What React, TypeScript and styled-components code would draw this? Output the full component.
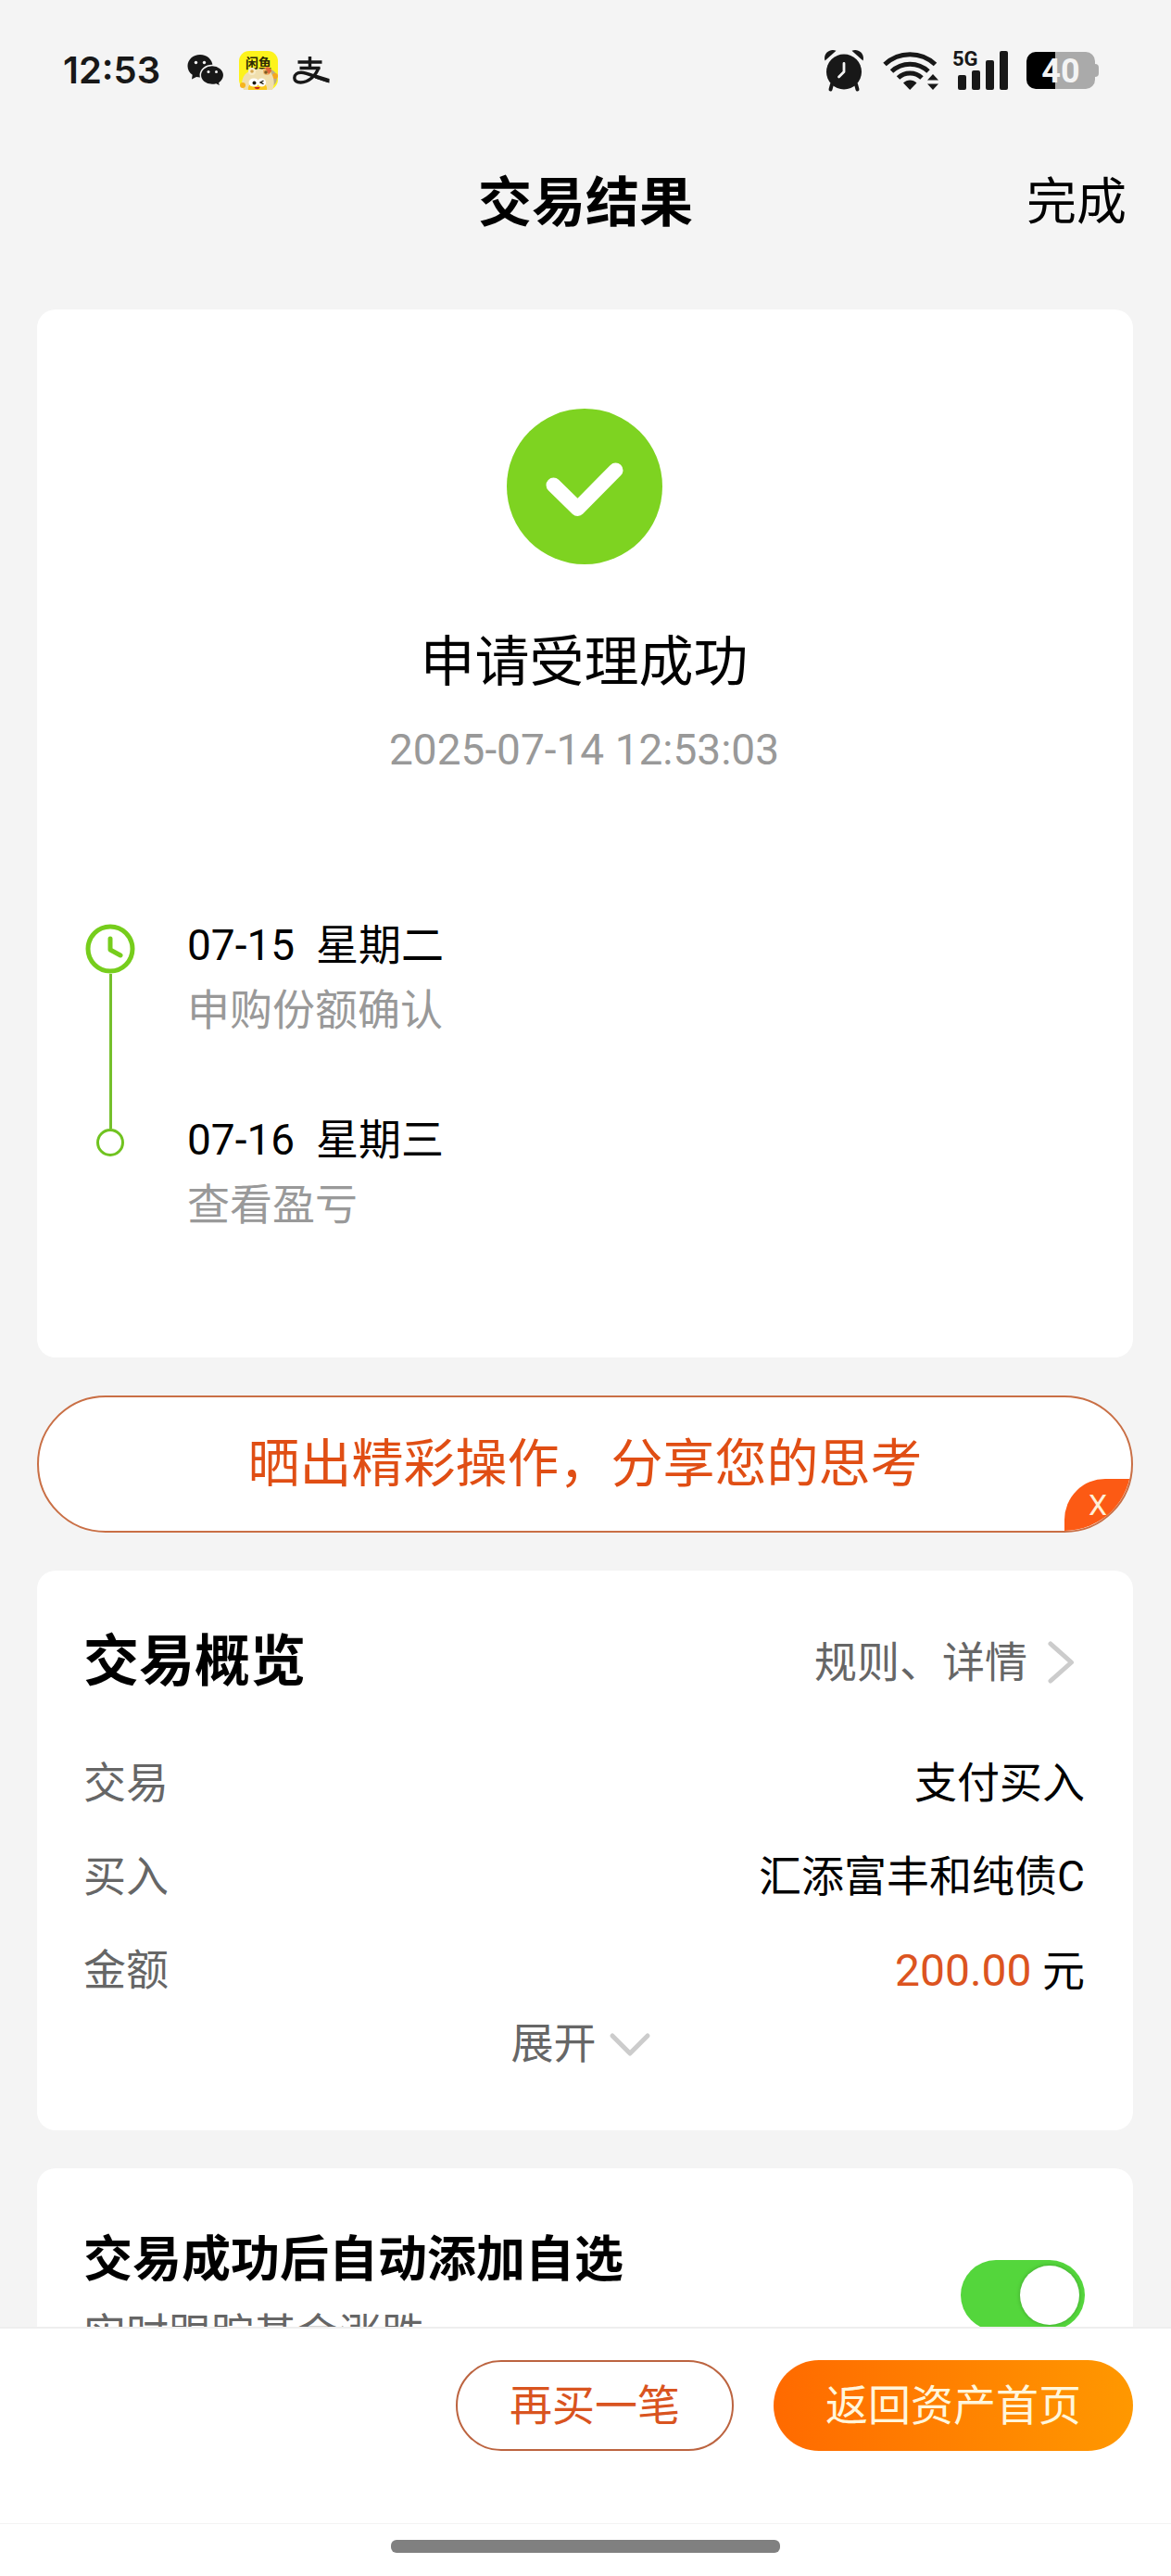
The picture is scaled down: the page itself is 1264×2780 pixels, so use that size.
import React, { useState } from 'react';
import styled, { createGlobalStyle } from 'styled-components';

const GlobalStyle = createGlobalStyle`
  *, *::before, *::after { box-sizing: border-box; }
  body {
    margin: 0;
    background: #f4f4f4;
    color: #000;
    font-family: Roboto, "Noto Sans CJK SC", sans-serif;
    font-size: 46px;
  }
  button, input { font: inherit; color: inherit; }
  button { margin: 0; padding: 0; border: 0; background: none; cursor: pointer; }
  a { color: inherit; text-decoration: none; }
  h1, h2, p, dl, dd, ol { margin: 0; padding: 0; }
`;

const Screen = styled.div`
  display: flex;
  flex-direction: column;
  height: 100vh;
  overflow: hidden;
`;

/* ---------- status bar ---------- */

const StatusBar = styled.div`
  display: flex;
  flex: none;
  align-items: center;
  justify-content: space-between;
  height: 152px;
  padding: 0 78px 0 68px;
  color: #181818;
`;

const StatusGroup = styled.div<{ $gap: number }>`
  display: flex;
  align-items: center;
  gap: ${(p) => p.$gap}px;
`;

const Clock = styled.time`
  margin-right: 14px;
  font-family: Inter, sans-serif;
  font-size: 40px;
  font-weight: 600;
  line-height: 48px;
`;

const Battery = styled.div`
  display: flex;
  align-items: center;

  &::after {
    content: "";
    width: 4px;
    height: 14px;
    border-radius: 0 4px 4px 0;
    background: #aaa;
  }
`;

const BatteryBody = styled.div`
  width: 74px;
  height: 40px;
  border-radius: 10px;
  background: linear-gradient(90deg, #000 42%, #aaa 42%);
  color: #f4f4f4;
  font-family: Roboto, sans-serif;
  font-size: 36px;
  font-weight: 700;
  line-height: 42px;
  text-align: center;
`;

/* ---------- header ---------- */

const Header = styled.header`
  display: grid;
  flex: none;
  grid-template-columns: 1fr auto 1fr;
  align-items: center;
  height: 134px;
  padding: 0 48px;
`;

const PageTitle = styled.h1`
  grid-column: 2;
  font-size: 58px;
  font-weight: 700;
  line-height: 84px;
`;

const DoneButton = styled.button`
  justify-self: end;
  font-size: 54px;
  line-height: 88px;
`;

const Content = styled.main`
  display: flex;
  flex: 1;
  flex-direction: column;
  gap: 41px;
  min-height: 0;
  padding: 48px 41px 0 40px;
  overflow-y: auto;
  scrollbar-width: none;

  & > * { flex: none; }
`;

const Card = styled.section`
  padding: 57px 52px 67px 50px;
  border-radius: 20px;
  background: #fff;
`;

/* ---------- result card ---------- */

const ResultCard = styled(Card)`
  display: flex;
  flex-direction: column;
  align-items: center;
  padding: 107px 54px 130px 52px;
`;

const ResultTitle = styled.h2`
  margin-top: 64px;
  font-size: 59px;
  font-weight: 400;
  line-height: 84px;
`;

const ResultTime = styled.time`
  margin-top: 22px;
  color: #999;
  line-height: 60px;
`;

const Timeline = styled.ol`
  align-self: stretch;
  margin-top: 146px;
  list-style: none;
`;

const Step = styled.li<{ $spaced?: boolean }>`
  display: flex;
  gap: 56px;
  line-height: 70px;

  & > div:last-child { padding-bottom: ${(p) => (p.$spaced ? 70 : 0)}px; }
`;

const StepRail = styled.div<{ $top?: number }>`
  display: flex;
  flex-direction: column;
  align-items: center;
  width: 54px;
  padding-top: ${(p) => p.$top ?? 0}px;

  svg { flex: none; }
`;

const RailLine = styled.div<{ $height?: number }>`
  flex: ${(p) => (p.$height ? 'none' : 1)};
  width: 3px;
  height: ${(p) => (p.$height ? `${p.$height}px` : 'auto')};
  background: #75c02c;
`;

const RailDot = styled.div`
  width: 30px;
  height: 30px;
  border: 3px solid #70c320;
  border-radius: 50%;
`;

const StepDate = styled.p`
  white-space: pre;
`;

const StepNote = styled.p`
  color: #999;
`;

/* ---------- share banner ---------- */

const ShareBanner = styled.div`
  position: relative;
  display: flex;
  height: 148px;
  border: 2px solid #c96f45;
  border-radius: 74px;
  background: #fff;
  overflow: hidden;
`;

const ShareButton = styled.button`
  flex: 1;
  color: #e04e14;
  font-size: 56px;
  line-height: 84px;
`;

const BannerClose = styled.button`
  position: absolute;
  right: 0;
  bottom: 0;
  width: 72px;
  height: 56px;
  border-top-left-radius: 44px;
  background: #fc5a14;
  color: #fff0d8;
  font-size: 32px;
  line-height: 56px;
`;

/* ---------- overview card ---------- */

const CardHead = styled.div`
  display: flex;
  align-items: center;
  justify-content: space-between;
  margin-bottom: 38px;
`;

const CardTitle = styled.h2`
  font-size: 60px;
  font-weight: 700;
  line-height: 84px;
`;

const DetailLink = styled.a`
  display: flex;
  align-items: center;
  gap: 14px;
  color: #666;
  line-height: 84px;
`;

const Row = styled.div`
  display: flex;
  justify-content: space-between;
  line-height: 101px;
`;

const RowLabel = styled.dt`
  color: #666;
`;

const Amount = styled.span`
  color: #dc5420;
  font-size: 48px;
`;

const ExpandButton = styled.button`
  display: flex;
  align-items: center;
  gap: 12px;
  margin: 0 auto;
  color: #666;
  line-height: 54px;
`;

/* ---------- watchlist card ---------- */

const WatchCard = styled(Card)`
  display: flex;
  align-items: center;
  justify-content: space-between;
`;

const WatchTitle = styled.label`
  display: block;
  font-size: 53px;
  font-weight: 700;
  line-height: 84px;
`;

const WatchNote = styled.p`
  color: #666;
  line-height: 76px;
`;

const Switch = styled.input`
  display: flex;
  align-items: center;
  width: 134px;
  height: 76px;
  margin: 0;
  padding: 0 6px;
  border-radius: 38px;
  appearance: none;
  background: #ccc;
  cursor: pointer;

  &::before {
    content: "";
    width: 64px;
    height: 64px;
    border-radius: 50%;
    background: #fff;
    box-shadow: 0 0 4px rgba(0, 0, 0, 0.25);
  }

  &:checked {
    justify-content: flex-end;
    background: #54d63c;
  }
`;

/* ---------- footer ---------- */

const ActionBar = styled.footer`
  display: flex;
  flex: none;
  justify-content: flex-end;
  gap: 43px;
  padding: 34px 41px 78px;
  border-top: 2px solid #eee;
  background: #fff;
`;

const ActionButton = styled.button<{ $primary?: boolean }>`
  height: 98px;
  padding: 0 56px;
  border: ${(p) => (p.$primary ? '0' : '2px solid #bc6440')};
  border-radius: 49px;
  background: ${(p) => (p.$primary ? 'linear-gradient(90deg, #ff6a00, #ff9800)' : '#fff')};
  color: ${(p) => (p.$primary ? '#fff6dc' : '#d9541f')};
  line-height: 84px;
`;

const HomeArea = styled.div`
  display: flex;
  flex: none;
  justify-content: center;
  height: 57px;
  padding-top: 17px;
  border-top: 1px solid #f2f2f2;
  background: #fff;
`;

const HomeIndicator = styled.div`
  width: 420px;
  height: 14px;
  border-radius: 6px;
  background: #808080;
`;

/* ---------- icons ---------- */

const WeChatIcon = () => (
  <svg width="40" height="36" viewBox="0 0 40 36" fill="#181818" aria-hidden="true">
    <path d="M14 1C6.300 1 .5 6.500.5 13.200c0 4 2 7.300 5.200 9.600L5 27.500l5-2.600c1.300.3 2.600.5 4 .5 7.600 0 13.500-5.500 13.500-12.200S21.600 1 14 1Z" />
    <path
      d="M27 12.500c-7 0-12.700 4.700-12.700 10.600S20 33.600 27 33.600c1.500 0 3-.2 4.300-.6l4.600 2.300-1-3.800c3-2 4.800-5 4.800-8.400 0-5.900-5.700-10.600-12.700-10.600Z"
      stroke="#f4f4f4"
      strokeWidth="1.500"
    />
    <circle cx="9.500" cy="9.500" r="1.700" fill="#f4f4f4" />
    <circle cx="18.500" cy="9.500" r="1.700" fill="#f4f4f4" />
    <circle cx="23" cy="19.500" r="1.500" fill="#f4f4f4" />
    <circle cx="31.500" cy="19.500" r="1.500" fill="#f4f4f4" />
  </svg>
);

const XianyuIcon = () => (
  <svg width="44" height="44" viewBox="0 0 44 44" role="img" aria-label="闲鱼">
    <rect x="1" y="1" width="42" height="42" rx="11" fill="#fdf31c" />
    <text x="22" y="19" textAnchor="middle" fontSize="14" fontWeight="700" fill="#2b2a05" fontFamily="'Noto Sans CJK SC', sans-serif">
      闲鱼
    </text>
    <path d="M36 21c4 2 6 5 6 9 0 5-3 9-8 10Z" fill="#bcae86" />
    <circle cx="40" cy="28" r="3" fill="#f6a81e" />
    <path d="M6 43c-4-8-1-17 6-20 2-3 5-3 7-2 3-1 5-1 7 0 3-2 8-1 9 3 4 5 5 13 2 19Z" fill="#f0dfae" />
    <circle cx="15" cy="23" r="4" fill="#f7ecc8" />
    <circle cx="31" cy="23" r="4" fill="#efb568" />
    <path d="M29 19c3-2 7 0 7 4l-3 3Z" fill="#e0663a" />
    <circle cx="15" cy="23" r="1.800" fill="#d6a44c" />
    <circle cx="30" cy="24" r="1.800" fill="#7d5a22" />
    <path d="M11 43c-1-5 3-8 10-8s11 3 10 8Z" fill="#fbc81c" />
    <circle cx="5" cy="38" r="3" fill="#f6b41e" />
    <ellipse cx="17" cy="35" rx="5.500" ry="4.500" fill="#fff" />
    <ellipse cx="25.500" cy="35" rx="4.500" ry="4.500" fill="#fff" />
    <circle cx="17.500" cy="35.500" r="2" fill="#1c1a10" />
    <path d="m27.500 33-3.500 2 3.500 1.600" fill="none" stroke="#1c1a10" strokeWidth="1.300" />
    <path d="M17.500 40h6c-.5 3-5 3-6 0Z" fill="#c6281c" />
  </svg>
);

const AlipayIcon = () => (
  <svg width="40" height="32" viewBox="0 0 40 32" fill="none" stroke="#181818" strokeWidth="3.400" role="img" aria-label="支付宝">
    <path d="M5.500 7h26M18.500 1v12M7.500 13.500h22" />
    <path d="M28 12.500C25 22 17 29 8.500 29 4 29 1.800 27 1.800 24c0-3.600 3.200-5.700 7.200-5.700 7 0 16 5.500 30 9.200" />
    <path d="M25 20.500 39.500 25v4.500L24 24.500Z" fill="#181818" stroke="none" />
  </svg>
);

const AlarmIcon = () => (
  <svg width="44" height="46" viewBox="0 0 44 46" fill="#181818" aria-hidden="true">
    <circle cx="22" cy="24.500" r="19" />
    <path d="M1.500 12.500C-1 5 7 -1.500 13.500 1.800Z" />
    <path d="M42.500 12.500C45 5 37 -1.500 30.500 1.800Z" />
    <path d="m9 38-1.500 5.500M35 38l1.500 5.500" stroke="#181818" strokeWidth="4" strokeLinecap="round" />
    <path d="M22 15.500v9L16.500 30" fill="none" stroke="#f4f4f4" strokeWidth="2.800" strokeLinecap="round" strokeLinejoin="round" />
  </svg>
);

const WifiIcon = () => (
  <svg width="60" height="44" viewBox="0 0 60 44" fill="none" stroke="#181818" strokeWidth="5" aria-hidden="true">
    <path d="M2 15.500c15-14.500 39.500-14.500 54.500 0" />
    <path d="M9.500 23c11-10.500 28.500-10.500 39.500 0" />
    <path d="M16.500 30c7-6.600 18.500-6.600 25.500 0" />
    <path d="M29.200 43 22 35.500c4-4 10.500-4 14.500 0Z" fill="#181818" stroke="none" />
    <path d="m54 26 6 6.500H48ZM54 43l6-6.500H48Z" fill="#181818" stroke="none" />
  </svg>
);

const SignalIcon = () => (
  <svg width="60" height="60" viewBox="0 -8 60 60" fill="#181818" role="img" aria-label="5G 信号">
    <text x="0" y="17" fontSize="22" fontWeight="700" fontFamily="Roboto, sans-serif">
      5G
    </text>
    <rect x="6" y="27" width="9" height="16" rx="2" />
    <rect x="21" y="22" width="9" height="21" rx="2" />
    <rect x="36" y="11" width="9" height="32" rx="2" />
    <rect x="51" y="1" width="9" height="42" rx="2" />
  </svg>
);

const SuccessIcon = () => (
  <svg width="168" height="168" viewBox="0 0 168 168" role="img" aria-label="成功">
    <circle cx="84" cy="84" r="84" fill="#7ed321" />
    <path d="m50.500 82.500 26 25.500 41-41.500" fill="none" stroke="#fff" strokeWidth="16" strokeLinecap="round" strokeLinejoin="round" />
  </svg>
);

const PendingIcon = () => (
  <svg width="54" height="54" viewBox="0 0 54 54" fill="none" stroke="#76cd1c" strokeWidth="5" aria-hidden="true">
    <circle cx="27" cy="27" r="24" />
    <path d="M27 16v12l11 6" strokeLinecap="round" strokeLinejoin="round" />
  </svg>
);

const ChevronRight = () => (
  <svg width="48" height="48" viewBox="0 0 48 48" fill="none" stroke="#ccc" strokeWidth="5" strokeLinecap="round" aria-hidden="true">
    <path d="m11 4 22.500 20L11 44" strokeLinejoin="round" />
  </svg>
);

const ChevronDown = ({ flipped }: { flipped: boolean }) => (
  <svg width="54" height="48" viewBox="0 0 54 48" fill="none" stroke="#ccc" strokeWidth="5" strokeLinecap="round" aria-hidden="true">
    <path d={flipped ? 'M5 34 24 14l19 20' : 'm5 16 19 19 19-19'} strokeLinejoin="round" />
  </svg>
);

/* ---------- page ---------- */

const overview: { label: string; value: React.ReactNode }[] = [
  { label: '交易', value: '支付买入' },
  { label: '买入', value: '汇添富丰和纯债C' },
  { label: '金额', value: <><Amount>200.00</Amount> 元</> },
];

export default function App() {
  const [bannerOpen, setBannerOpen] = useState(true);
  const [expanded, setExpanded] = useState(false);
  const [watching, setWatching] = useState(true);

  return (
    <>
      <GlobalStyle />
      <Screen>
        <StatusBar>
          <StatusGroup $gap={15}>
            <Clock>12:53</Clock>
            <WeChatIcon />
            <XianyuIcon />
            <AlipayIcon />
          </StatusGroup>
          <StatusGroup $gap={20}>
            <AlarmIcon />
            <StatusGroup $gap={15}>
              <WifiIcon />
              <SignalIcon />
            </StatusGroup>
            <Battery>
              <BatteryBody>40</BatteryBody>
            </Battery>
          </StatusGroup>
        </StatusBar>

        <Header>
          <PageTitle>交易结果</PageTitle>
          <DoneButton type="button">完成</DoneButton>
        </Header>

        <Content>
          <ResultCard>
            <SuccessIcon />
            <ResultTitle>申请受理成功</ResultTitle>
            <ResultTime dateTime="2025-07-14T12:53:03">2025-07-14 12:53:03</ResultTime>
            <Timeline>
              <Step $spaced>
                <StepRail $top={12}>
                  <PendingIcon />
                  <RailLine />
                </StepRail>
                <div>
                  <StepDate>{'07-15  星期二'}</StepDate>
                  <StepNote>申购份额确认</StepNote>
                </div>
              </Step>
              <Step>
                <StepRail>
                  <RailLine $height={23} />
                  <RailDot />
                </StepRail>
                <div>
                  <StepDate>{'07-16  星期三'}</StepDate>
                  <StepNote>查看盈亏</StepNote>
                </div>
              </Step>
            </Timeline>
          </ResultCard>

          {bannerOpen && (
            <ShareBanner>
              <ShareButton type="button">晒出精彩操作，分享您的思考</ShareButton>
              <BannerClose type="button" onClick={() => setBannerOpen(false)}>
                X
              </BannerClose>
            </ShareBanner>
          )}

          <Card>
            <CardHead>
              <CardTitle>交易概览</CardTitle>
              <DetailLink href="#detail">
                规则、详情
                <ChevronRight />
              </DetailLink>
            </CardHead>
            <dl>
              {overview.map((row) => (
                <Row key={row.label}>
                  <RowLabel>{row.label}</RowLabel>
                  <dd>{row.value}</dd>
                </Row>
              ))}
            </dl>
            <ExpandButton type="button" aria-expanded={expanded} onClick={() => setExpanded(!expanded)}>
              展开
              <ChevronDown flipped={expanded} />
            </ExpandButton>
          </Card>

          <WatchCard>
            <div>
              <WatchTitle htmlFor="watch">交易成功后自动添加自选</WatchTitle>
              <WatchNote>实时跟踪基金涨跌</WatchNote>
            </div>
            <Switch
              id="watch"
              type="checkbox"
              role="switch"
              checked={watching}
              onChange={(e) => setWatching(e.target.checked)}
            />
          </WatchCard>
        </Content>

        <ActionBar>
          <ActionButton type="button">再买一笔</ActionButton>
          <ActionButton type="button" $primary>
            返回资产首页
          </ActionButton>
        </ActionBar>
        <HomeArea>
          <HomeIndicator />
        </HomeArea>
      </Screen>
    </>
  );
}
